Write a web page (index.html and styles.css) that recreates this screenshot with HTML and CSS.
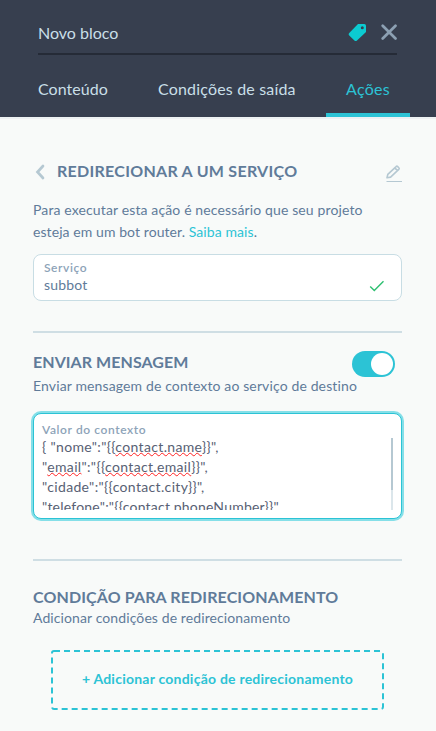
FILE: index.html
```html
<!DOCTYPE html>
<html lang="pt-BR">
<head>
<meta charset="utf-8">
<title>Novo bloco</title>
<link rel="stylesheet" href="styles.css">
</head>
<body>
<header class="header">
  <div class="title-row">
    <span class="block-name">Novo bloco</span>
    <svg class="tag-icon" width="18" height="18" viewBox="0 0 18 18"><path fill="#0ccbd1" fill-rule="evenodd" d="M10 0h6.200Q18 0 18 1.800V8L9 16.600q-1.300 1-2.600 0L1 11.200q-.8-1 0-2zM14.300 2.200a1.500 1.500 0 1 0 0 3 1.500 1.500 0 0 0 0-3z"/></svg>
    <svg class="close-icon" width="16" height="16" viewBox="0 0 16 16"><path d="M1.700 1.700l12.800 12.800m0-12.800l-12.800 12.800" stroke="#8ca0b3" stroke-width="2.700" stroke-linecap="round"/></svg>
  </div>
  <nav class="tabs">
    <span class="tab tab-content">Conteúdo</span>
    <span class="tab tab-conditions">Condições de saída</span>
    <span class="tab tab-active">Ações</span>
  </nav>
</header>
<main class="panel">
  <section class="service">
    <div class="heading-row">
      <svg class="back-icon" width="10" height="16" viewBox="0 0 10 16"><path d="M8 2L2.500 8 8 14" fill="none" stroke="#b5c8d2" stroke-width="2.700" stroke-linecap="round"/></svg>
      <h2 class="heading heading-service">REDIRECIONAR A UM SERVIÇO</h2>
      <svg class="edit-icon" width="17" height="17" viewBox="0 0 17 17"><path d="M2 12.800l.8-3.400L11.100 1.600q.8-.8 1.600 0l1.100 1.100q.8.800 0 1.600L5.600 12.100zM9.800 2.900l2.700 2.700" fill="none" stroke="#b5c8d2" stroke-width="1.600" stroke-linejoin="round"/><path d="M1.500 16.500H17" stroke="#b5c8d2"/></svg>
    </div>
    <p class="info">Para executar esta ação é necessário que seu projeto<br><span class="info-second">esteja em um bot router. <a class="link">Saiba mais</a>.</span></p>
    <div class="field">
      <div class="field-body">
        <div class="label">Serviço</div>
        <div class="value">subbot</div>
      </div>
      <svg class="check" width="16" height="12" viewBox="0 0 16 12"><path d="M1.200 6.500l4.100 4L14.500 1.300" fill="none" stroke="#2dbf70" stroke-width="1.400"/></svg>
    </div>
  </section>
  <section class="message">
    <div class="switch-row">
      <h2 class="heading heading-message">ENVIAR MENSAGEM</h2>
      <span class="switch"><span class="knob"></span></span>
    </div>
    <p class="sub sub-message">Enviar mensagem de contexto ao serviço de destino</p>
    <div class="context">
      <div class="label">Valor do contexto</div>
      <div class="editor">
        <div class="code">
          <div class="line line-first">{ "nome":"{{<span class="typo">contact.name</span>}}",</div>
          <div class="line">"<span class="typo">email</span>":"{{<span class="typo">contact.email</span>}}",</div>
          <div class="line">"cidade":"{{contact.city}}",</div>
          <div class="line line-last">"telefone":"{{contact.phoneNumber}}"</div>
        </div>
        <div class="track"><div class="thumb"></div></div>
      </div>
    </div>
  </section>
  <section class="condition">
    <h2 class="heading heading-condition">CONDIÇÃO PARA REDIRECIONAMENTO</h2>
    <p class="sub">Adicionar condições de redirecionamento</p>
    <div class="add">
      <svg class="add-outline" width="333" height="60"><rect x="1" y="1" width="331" height="58" rx="2" fill="none" stroke="#2cc3d5" stroke-width="2" stroke-dasharray="6 4"/></svg>
      <span class="add-text">+ Adicionar condição de redirecionamento</span>
    </div>
  </section>
</main>
</body>
</html>
```
FILE: styles.css
```css
* { box-sizing: border-box; }
body {
  margin: 0;
  height: 731px;
  overflow: hidden;
  background: #f8faf9;
  color: #607b99;
  font-family: Lato, "Open Sans", sans-serif;
  font-size: 14px;
  font-variant-ligatures: none;
}
h2, p { margin: 0; }
svg { display: block; flex: none; }
.header {
  height: 119px;
  padding: 0 26px 0 38px;
  background: #373f4f;
  border-bottom: 2px solid #edf1f2;
}
.title-row {
  display: flex;
  align-items: flex-start;
  width: 359px;
  height: 55px;
  padding-top: 24px;
  border-bottom: 2px solid #252b37;
}
.block-name { flex: 1; font-size: 16px; line-height: 18px; color: #c9dfe8; }
.close-icon { margin-left: 15px; }
.tabs { display: flex; height: 62px; font-size: 16px; line-height: 20px; color: #c9dfe8; white-space: nowrap; }
.tab { padding-top: 24px; }
.tab-content { width: 120px; letter-spacing: .05px; }
.tab-conditions { width: 168px; letter-spacing: .18px; }
.tab-active { width: 84px; padding-left: 20px; color: #2cc3d5; border-bottom: 4px solid #2cc3d5; letter-spacing: .3px; }
.panel { padding: 0 34px 0 33px; white-space: nowrap; }
.service { height: 214px; padding-top: 42px; border-bottom: 2px solid #cfdee4; }
.heading { font-size: 16px; line-height: 20px; font-weight: 700; }
.heading-row { display: flex; height: 22px; }
.back-icon { margin: 3px 12px 0 2px; }
.heading-service { flex: 1; letter-spacing: .28px; }
.heading-message { line-height: 22px; letter-spacing: .06px; }
.heading-condition { letter-spacing: .12px; }
.edit-icon { margin-top: 4px; }
.info { margin-top: 16px; line-height: 22px; letter-spacing: .13px; }
.info-second { letter-spacing: .08px; }
.link { color: #2cc3d5; }
.field {
  display: flex;
  justify-content: space-between;
  height: 47px;
  margin-top: 11px;
  padding: 5px 16px 0 10px;
  background: #fff;
  border: 1px solid #c8dde4;
  border-radius: 8px;
}
.label { font-size: 12px; line-height: 16px; font-weight: 600; color: #8da3b8; letter-spacing: .6px; }
.value { line-height: 18px; letter-spacing: .2px; }
.check { margin-top: 20px; }
.message { height: 228px; padding-top: 18px; border-bottom: 2px solid #cfdee4; }
.switch-row { display: flex; justify-content: space-between; height: 24px; padding-right: 7px; }
.switch { width: 43px; height: 26px; padding: 2px; border-radius: 13px; background: #2cc3d5; }
.knob { display: block; width: 22px; height: 22px; margin-left: 17px; border-radius: 50%; background: #fff; }
.sub { line-height: 22px; letter-spacing: .1px; }
.sub-message { letter-spacing: .13px; }
.context {
  height: 106px;
  margin-top: 16px;
  padding: 8px 8px 0;
  background: #fff;
  border: 1px solid #2cc3d5;
  border-radius: 8px;
  box-shadow: 0 0 0 2px #85dfe8;
}
.editor { display: flex; justify-content: space-between; height: 72px; overflow: hidden; color: #586174; }
.line { line-height: 20px; letter-spacing: .34px; }
.line-first { height: 19px; line-height: 18px; }
.line-last { letter-spacing: .22px; }
.typo { text-decoration: underline wavy #f22 1px; text-underline-offset: 0; text-decoration-skip-ink: none; }
.track { width: 2px; height: 72px; background: #dbe6eb; }
.thumb { height: 52px; background: #b5c8d2; }
.condition { padding-top: 26px; }
.add { position: relative; display: flex; justify-content: center; align-items: center; width: 333px; height: 60px; margin: 21px 0 0 18px; padding-bottom: 3px; }
.add-outline { position: absolute; inset: 0; }
.add-text { color: #2cc3d5; font-weight: 700; letter-spacing: .23px; }
```
